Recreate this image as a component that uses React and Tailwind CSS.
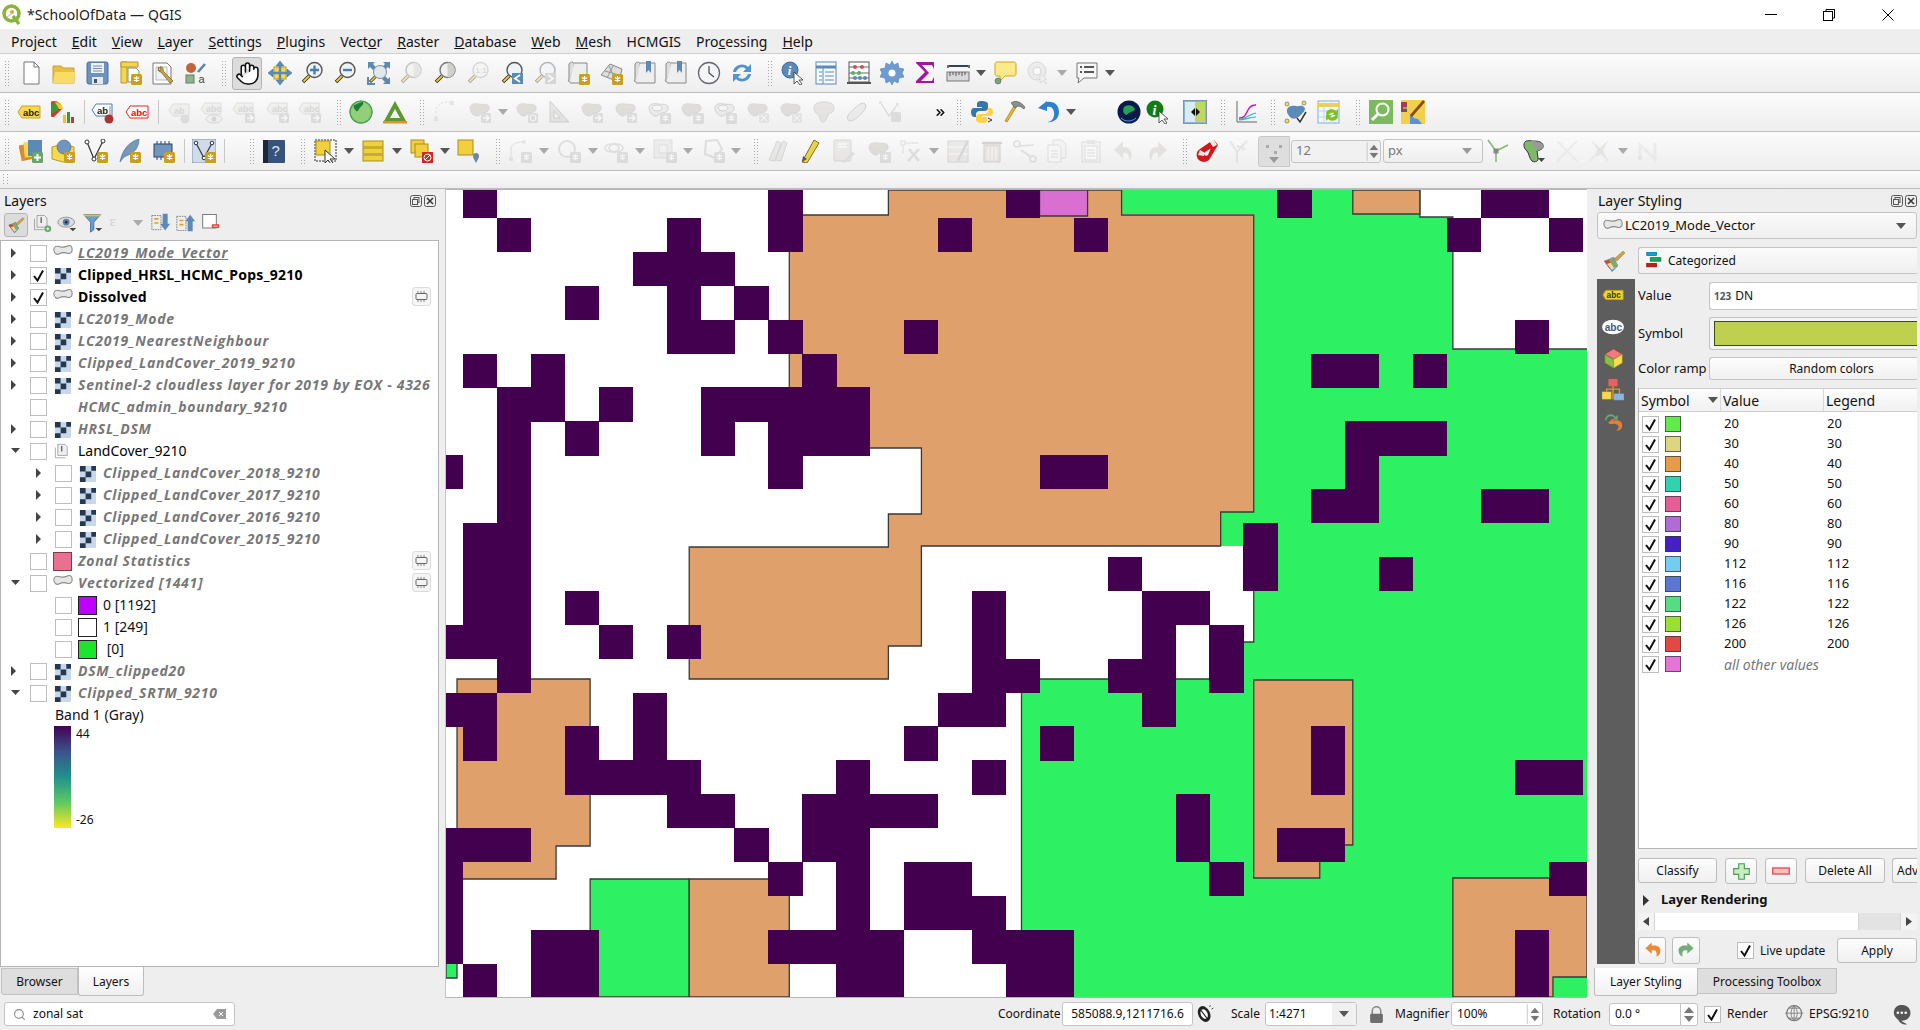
import React from "react";
import { Hand, Search, ChevronsRight } from "lucide-react";

const FONT = { fontFamily: '"Noto Sans", "Open Sans", sans-serif' };

const Badge = ({ c = "#c9a01e" }) => (
  <g>
    <rect x="13" y="13" width="11" height="11" rx="1.5" fill={c} />
    <path d="M18.5 15v6M15.8 16.5l5.4 3M21.2 16.5l-5.4 3" stroke="#fff" strokeWidth="1.3" />
  </g>
);
const Mag = ({ lens = "#eef3f8", stroke = "#555" }) => (
  <g>
    <path d="M9 15L3 21" stroke="#222" strokeWidth="3.4" />
    <path d="M9 15L3.5 20.5" stroke="#f2c83a" strokeWidth="1.8" />
    <circle cx="14.5" cy="9" r="7.5" fill={lens} stroke={stroke} strokeWidth="1.4" />
  </g>
);
const BLOB = "M2 8c0-4 5-5 9-4s9-1 10 3-3 6-6 6-4 4-7 3-6-4-6-8z";
const Blob = ({ f = "#bdbab4" }) => <path d={BLOB} fill={f} stroke="#999" strokeWidth="0.6" />;
const Tag = ({ fill, st, col = "#222", x = 6 }) => (
  <g>
    <path d="M1 12l4-6h18v12H5z" fill={fill} stroke={st} />
    <text x={x} y="15.5" fontSize="9.5" fontWeight="700" fill={col} fontFamily="Liberation Sans">abc</text>
  </g>
);
const Raster = () => (
  <g>
    <rect x="1" y="1" width="17" height="17" fill="#c8d8ea" />
    <path d="M1 1h6v6H1zM13 1h5v5h-5zM7 7h6v6H7zM1 13h6v5H1z" fill="#24394f" />
  </g>
);

const IC = {
  file: <g><path d="M5 1h10l5 5v17H5z" fill="#fff" stroke="#777" /><path d="M15 1v5h5" fill="none" stroke="#777" /></g>,
  folder: <g><path d="M1 5h8l2 2h11v15H1z" fill="#e8bf3e" stroke="#c9a233" /><path d="M1 22l2-11h20l-1 11z" fill="#f8dc66" /></g>,
  save: <g><rect x="2" y="1" width="21" height="22" rx="2" fill="#6b93bd" stroke="#4a7099" /><rect x="6" y="2" width="13" height="10" fill="#eef2f6" /><path d="M8 5h9M8 7.500h9M8 10h9" stroke="#7a8ea3" /><rect x="7" y="16" width="11" height="7" fill="#e3e8ee" /><rect x="9" y="18" width="3" height="4" fill="#456" /></g>,
  layout: <g><path d="M3 1h6v21H3z" fill="#f3d552" stroke="#b7982a" /><path d="M3 1h17v5H3z" fill="#f3d552" stroke="#b7982a" /><path d="M10 7h8l3 3v11H10z" fill="#fff" stroke="#888" /><Badge /></g>,
  manager: <g><path d="M3 2h14l4 4v17H3z" fill="#fff" stroke="#777" /><path d="M6 6h11v13H6z" fill="#eef3f8" stroke="#bbb" /><path d="M9 6c-2 3 0 5 2 5l9 11 3-2-10-10c1-2-1-5-3-4l1 3-2 1z" fill="#c9a640" stroke="#6c5a1c" strokeWidth="0.7" /></g>,
  style: <g><circle cx="7" cy="7" r="5" fill="#c0643a" /><rect x="2" y="14" width="8" height="8" fill="#8db48e" stroke="#5f7f60" /><path d="M14 11l7-8" stroke="#5a84ad" strokeWidth="2.6" /><text x="14.500" y="22" fontSize="11" fill="#444" fontFamily="Liberation Sans">a</text></g>,
  pan: <g><rect x="6" y="6" width="12" height="12" fill="#f5d94f" stroke="#b7982a" /><path d="M12 0l4 5h-8zM12 24l4-5H8zM0 12l5-4v8zM24 12l-5-4v8z" fill="#5b8ab8" stroke="#3f6a9a" strokeWidth="0.5" /><path d="M12 4v16M4 12h16" stroke="#5b8ab8" strokeWidth="2.4" /></g>,
  zoomIn: <g><Mag /><path d="M14.500 4.500v9M10 9h9" stroke="#4a7db0" strokeWidth="2.4" /></g>,
  zoomOut: <g><Mag /><path d="M10 9h9" stroke="#4a7db0" strokeWidth="2.4" /></g>,
  zoomFull: <g><path d="M1 1h7l-2 2 3 3-3 3-3-3-2 2zM23 1v7l-2-2-3 3-3-3 3-3-2-2zM23 23h-7l2-2-3-3 3-3 3 3 2-2z" fill="#5b8ab8" /><path d="M1 16v7h7" stroke="#5b8ab8" strokeWidth="2" fill="none" /><path d="M9 15L3 21" stroke="#222" strokeWidth="3" /><path d="M9 15L3.500 20.500" stroke="#f2c83a" strokeWidth="1.7" /><circle cx="13" cy="11" r="6.500" fill="#dfe8f0" stroke="#888" /></g>,
  zoomSel: <g><Mag lens="#f0f0ee" stroke="#777" /><path d="M14.500 1.500a7.500 7.500 0 010 15z" fill="#cfcfcb" /></g>,
  zoom11: <g><Mag lens="#f4f4f2" stroke="#aaa" /><text x="9.500" y="12" fontSize="8" fill="#999" fontFamily="Liberation Sans">1:1</text></g>,
  zoomLast: <g><Mag /><rect x="12" y="12" width="11" height="11" fill="#5b8ab8" /><path d="M20 14l-5 3.500 5 3.500" stroke="#fff" strokeWidth="1.800" fill="none" /></g>,
  zoomNext: <g><Mag /><rect x="12" y="12" width="11" height="11" fill="#aaa" /><path d="M15 14l5 3.500-5 3.500" stroke="#fff" strokeWidth="1.800" fill="none" /></g>,
  newMap: <g><path d="M3 3c2-3 5-2 5 0v18H4c-2 0-2-2-1-3z" fill="#ddd" stroke="#888" /><path d="M8 2h13v20H4" fill="#eee" stroke="#888" /><Badge /></g>,
  new3d: <g><path d="M2 14L11 3l12 5-3 13z" fill="#ddd" stroke="#888" /><path d="M6 10l14 4M10 5l6 13M14 5l-6 12" stroke="#999" fill="none" /><Badge /></g>,
  bookmark: <g><path d="M2 3c2-3 5-2 5 0v18H3c-2 0-2-2-1-3z" fill="#ddd" stroke="#888" /><path d="M7 2h15v20H3" fill="#eee" stroke="#888" /><path d="M13 0h5v12l-2.500-3-2.500 3z" fill="#5b8ab8" /></g>,
  clock: <g><circle cx="12" cy="12" r="10.500" fill="#f5f6f8" stroke="#667" strokeWidth="1.300" /><path d="M12 5v7l5 4" stroke="#445" strokeWidth="1.200" fill="none" /></g>,
  refresh: <g><path d="M3 11C4 4 13 1 18 6l3-3v8h-8l3-3c-3-3-8-2-10 3z" fill="#4f95d3" /><path d="M21 13c-1 7-10 10-15 5l-3 3v-8h8l-3 3c3 3 8 2 10-3z" fill="#4f95d3" /></g>,
  identify: <g><circle cx="9" cy="9" r="8" fill="#5b8ab8" stroke="#3f6a9a" /><text x="6.800" y="14" fontSize="13" fontWeight="700" fontStyle="italic" fill="#fff" fontFamily="Liberation Serif">i</text><path d="M13 11v12l3-3 3 4 2-1-3-4h4z" fill="#fff" stroke="#333" strokeWidth="0.8" /></g>,
  table: <g><rect x="2" y="1" width="20" height="22" fill="#f7fafd" stroke="#5b8ab8" /><path d="M2 6h20" stroke="#5b8ab8" strokeWidth="3" /><path d="M9 6v17M5 11h3M11 11h9M5 15h3M11 15h9M5 19h3M11 19h9" stroke="#5b8ab8" /></g>,
  abacus: <g><rect x="2" y="1" width="20" height="20" fill="#fff" stroke="#555" /><path d="M2 6h20M2 12h20M2 17h20" stroke="#666" /><circle cx="8" cy="6" r="2" fill="#d25050" /><circle cx="15" cy="6" r="2" fill="#d25050" /><circle cx="6" cy="12" r="2" fill="#5cb060" /><circle cx="12" cy="12" r="2" fill="#5cb060" /><circle cx="8" cy="17" r="2" fill="#5b8ab8" /><circle cx="13" cy="17" r="2" fill="#5b8ab8" /><circle cx="18" cy="17" r="2" fill="#5b8ab8" /><rect x="0" y="21" width="24" height="2" fill="#555" /></g>,
  gear: <g><path d="M12 0l2 4 4-2 1 5 5 1-2 4 2 4-5 1-1 5-4-2-2 4-2-4-4 2-1-5-5-1 2-4-2-4 5-1 1-5 4 2z" fill="#6e9bd0" stroke="#4a74a8" strokeWidth="0.5" /><circle cx="12" cy="12" r="3.500" fill="#fff" /></g>,
  sigma: <path d="M3 1h18v7l-2-4H9l7 8-8 8h11l2-4v6H3v-2l9-9-9-9z" fill="#a513a0" />,
  ruler: <g><path d="M3 5h19" stroke="#345" strokeWidth="2" /><path d="M2 4v3M23 4v3" stroke="#345" strokeWidth="1.500" /><rect x="1" y="11" width="22" height="9" fill="#d8d8d8" stroke="#777" /><path d="M4 11v4M7 11v3M10 11v4M13 11v3M16 11v4M19 11v3" stroke="#555" /></g>,
  note: <g><path d="M2 3c0-1 1-2 2-2h17c1 0 2 1 2 2v10c0 1-1 2-2 2H12l-5 5v-5H4c-1 0-2-1-2-2z" fill="#fbe98c" stroke="#c9a91e" /><circle cx="5" cy="20" r="3" fill="#7da36f" stroke="#456" strokeWidth="0.5" /></g>,
  gearcur: <g><circle cx="11" cy="10" r="9" fill="#ddd" stroke="#aaa" /><circle cx="11" cy="10" r="4" fill="#fff" stroke="#aaa" /><path d="M14 13v9l3-2 3 3 1-1-3-3 3-1z" fill="#eee" stroke="#aaa" strokeWidth="0.7" /></g>,
  tips: <g><path d="M2 2h20v15H9l-6 5 1-5H2z" fill="#f8f8f8" stroke="#777" /><path d="M5 6h2M5 11h2M9 6h10M9 11h10" stroke="#555" strokeWidth="2" /></g>,
  lbl: <Tag fill="#f7d94c" st="#c9a227" />,
  diagram: <g><path d="M11 9a8 8 0 10-8 8z" fill="#d33" /><path d="M4 2a8 8 0 018 7H4z" fill="#f6c71c" /><path d="M4 2a8 8 0 00-3 12l7-5z" fill="#3a9a38" /><rect x="12" y="15" width="3" height="8" fill="#f0c030" /><rect x="16" y="12" width="3" height="11" fill="#3a9a38" /><rect x="20" y="17" width="3" height="6" fill="#c33" /></g>,
  lblPin: <g><path d="M1 10l4-6h16v12H5z" fill="#fff" stroke="#4a7fb5" /><text x="6" y="13.500" fontSize="9.500" fontWeight="700" fill="#222" fontFamily="Liberation Sans">ab</text><path d="M19 6v10" stroke="#888" /><circle cx="18" cy="19" r="4.500" fill="#a33" /></g>,
  lblRed: <Tag fill="#fff" st="#e22" col="#d11" />,
  lblPinG: <g><path d="M1 10l4-6h16v12H5z" fill="#e8e6e1" stroke="#bbb" /><text x="6" y="13.500" fontSize="9" fontWeight="700" fill="#aaa" fontFamily="Liberation Sans">ab</text><circle cx="17" cy="19" r="4.500" fill="#bbb" /></g>,
  lblEye: <g><path d="M1 9l4-6h16v11H5z" fill="#e8e6e1" stroke="#bbb" /><text x="6" y="12" fontSize="9" fontWeight="700" fill="#aaa" fontFamily="Liberation Sans">abc</text><ellipse cx="14" cy="19" rx="8" ry="4" fill="#eee" stroke="#aaa" /><circle cx="14" cy="19" r="2.500" fill="#aaa" /></g>,
  lblBox: <g><path d="M1 9l4-6h16v11H5z" fill="#e8e6e1" stroke="#bbb" /><text x="6" y="12" fontSize="9" fontWeight="700" fill="#aaa" fontFamily="Liberation Sans">abc</text><rect x="13" y="13" width="10" height="10" rx="1.500" fill="#bbb" /><path d="M15 18h6m-3-3l3 3-3 3" stroke="#fff" strokeWidth="1.300" fill="none" /></g>,
  globeG: <g><circle cx="12" cy="12" r="11" fill="#93cf7b" stroke="#3e9c4a" strokeWidth="1.200" /><path d="M5 5c3 0 4-3 9-3 1 3-2 4-3 6-2 1-1 4-4 3-1-2-3-3-2-6z" fill="#1f7d35" /><circle cx="12" cy="12" r="11" fill="none" stroke="#4ba553" /></g>,
  triangle: <g><path d="M12 1L23 21H1zM12 9l-5 9h10z" fill="#5a9a2e" fillRule="evenodd" /><rect x="0" y="21" width="24" height="2.500" fill="#ef8a2b" /></g>,
  digit: <g><path d="M3 21V10C4 4 9 2 18 2" fill="none" stroke="#bbb" strokeWidth="1" strokeDasharray="2 2" /><rect x="1" y="17" width="4" height="4" fill="#ccc" /><rect x="17" y="1" width="4" height="4" fill="#ccc" /></g>,
  blobArr: <g><Blob /><rect x="13" y="13" width="10" height="10" rx="1.500" fill="#bbb" /><path d="M15 18h6m-3-3l3 3-3 3" stroke="#fff" strokeWidth="1.300" fill="none" /></g>,
  blobRot: <g><Blob /><rect x="13" y="13" width="10" height="10" rx="1.500" fill="#bbb" /><circle cx="18" cy="18" r="3" stroke="#fff" fill="none" /></g>,
  setsq: <g><path d="M3 1l19 21H3zM7 11v7h6z" fill="#cfccc6" stroke="#999" fillRule="evenodd" /></g>,
  blobBadge: <g><Blob /><Badge c="#bbb" /></g>,
  blobX: <g><Blob /><rect x="13" y="13" width="10" height="10" rx="1" fill="#ccc" /><path d="M15 15l6 6m0-6l-6 6" stroke="#fff" /></g>,
  ring: <g><path d={BLOB} fill="#ddd" stroke="#999" /><ellipse cx="10" cy="8" rx="5" ry="3" fill="#f3f3f3" stroke="#999" /><Badge c="#bbb" /></g>,
  arch: <path d="M2 8c0-5 5-6 10-6s10 1 10 6-5 5-6 7-2 7-5 7-3-4-4-6-5-3-5-8z" fill="#cfcdc8" stroke="#aaa" />,
  leaf: <path d="M4 20c-2-5 3-8 7-12s8-6 10-4 0 6-4 10-10 9-13 6z" fill="#ddd" stroke="#999" />,
  vertex: <g><path d="M3 3l8 13 8-11" fill="none" stroke="#aaa" strokeWidth="1.200" /><rect x="1" y="1" width="3" height="3" fill="#ccc" /><rect x="18" y="3" width="3" height="3" fill="#ccc" /><rect x="13" y="12" width="10" height="10" rx="1.500" fill="#bbb" /></g>,
  python: <g><path d="M12 1c-5 0-5 2-5 3v3h5v1H4c-2 0-3 2-3 4s1 5 3 5h2v-3c0-2 2-3 4-3h5c1 0 3-1 3-3V4c0-2-3-3-6-3z" fill="#3776ab" /><path d="M12 23c5 0 5-2 5-3v-3h-5v-1h8c2 0 3-2 3-4s-1-4-3-4h-2v3c0 2-2 3-4 3H9c-1 0-3 1-3 3v3c0 2 3 3 6 3z" fill="#fdd344" /><path d="M18 22l4-2-4-2" stroke="#333" fill="none" /></g>,
  hammer: <g><path d="M14 6L4 22l-2-1L12 4z" fill="#efb51e" stroke="#8c6a10" strokeWidth="0.6" /><path d="M8 3c4-3 9-2 14 4l-1 2c-4-3-6-4-9-1z" fill="#8a8f94" stroke="#444" strokeWidth="0.5" /></g>,
  undoB: <g><path d="M11 2c7-1 12 3 12 10s-6 11-12 10c5 0 8-5 7-10s-4-6-7-5v4L2 8l9-7z" fill="#2d7fcf" /></g>,
  earth: <g><circle cx="12" cy="12" r="11.500" fill="#0c1a4a" /><path d="M7 7c4-3 9-2 11 2-2 4-6 2-8 6-3 0-5-4-3-8z" fill="#23a35a" /><path d="M4 18c5 5 12 3 15 0" stroke="#4aa0ef" fill="none" /></g>,
  infoG: <g><circle cx="9" cy="9" r="8.500" fill="#0f7d16" /><text x="6.500" y="14.500" fontSize="14" fontWeight="700" fill="#fff" fontFamily="Liberation Serif" fontStyle="italic">i</text><path d="M13 11v12l3-3 3 4 2-1-3-4h4z" fill="#fff" stroke="#333" strokeWidth="0.8" /></g>,
  swipe: <g><rect x="0" y="0" width="24" height="24" fill="#89b7d8" stroke="#778" /><rect x="12" y="2" width="10" height="20" fill="#bfd85e" /><rect x="2" y="2" width="10" height="20" fill="#dcecf6" /><path d="M12 8l-4 4 4 4zM13 8l4 4-4 4z" fill="#111" /></g>,
  chart: <g><path d="M3 1v21h20" stroke="#666" fill="none" /><path d="M5 18c5 0 6-2 9-8 2-4 5-5 8-5" stroke="#c0209e" strokeWidth="1.500" fill="none" /><path d="M5 20c7 0 9-3 17-3M5 19c8 0 10-5 17-6" stroke="#3eb0c0" strokeWidth="1.200" fill="none" /></g>,
  vcheck: <g><path d="M3 10c0-4 6-5 9-4s5-2 8 1-2 6-3 8-8 6-11 2 -3-4-3-7z" fill="#5b8ab8" /><circle cx="3" cy="4" r="2" fill="#f5e04f" stroke="#555" strokeWidth="0.6" /><circle cx="20" cy="3" r="2" fill="#f5e04f" stroke="#555" strokeWidth="0.6" /><circle cx="3" cy="21" r="2" fill="#f5e04f" stroke="#555" strokeWidth="0.6" /><path d="M13 18l3 4 6-10" stroke="#333" strokeWidth="1.500" fill="#fff" /></g>,
  tabSync: <g><rect x="1" y="1" width="21" height="22" fill="#f4f8fc" stroke="#7ab0d8" /><path d="M1 5h21" stroke="#f3cc4a" strokeWidth="4" /><path d="M7 1v22M14 1v22M1 11h21M1 17h21" stroke="#bcd6ec" /><path d="M9 14c0-5 7-6 10-3l2-2v6h-6l2-2c-2-1-5 0-6 3z" fill="#7cc226" /><path d="M21 16c0 5-7 6-10 3l-2 2v-6h6l-2 2c2 1 5 0 6-3z" fill="#7cc226" /></g>,
  greenMag: <g><rect x="0" y="0" width="24" height="24" fill="#7cb95f" /><circle cx="13.500" cy="9.500" r="6" fill="none" stroke="#fff" strokeWidth="2" /><path d="M9 14l-6 6" stroke="#fff" strokeWidth="3" /></g>,
  osm: <g><rect x="0" y="0" width="24" height="24" fill="#f3d04c" /><path d="M0 2h6v10H0z" fill="#a73a5a" /><path d="M9 14c3 2 3 5 8 5l4 5H9z" fill="#5a8ee0" /><path d="M22 0L9 15l2 2L24 2z" fill="#8a4a14" /><path d="M2 8h4" stroke="#5c5" strokeWidth="2" /></g>,
  addLayer: <g><rect x="1" y="5" width="13" height="16" fill="#d8893a" transform="rotate(-12 8 13)" /><rect x="5" y="3" width="12" height="15" fill="#f5d94f" transform="rotate(-6 10 10)" /><rect x="9" y="1" width="14" height="16" fill="#5b8ab8" /><rect x="13" y="13" width="11" height="11" rx="1.500" fill="#6aa46a" /><path d="M18.500 15v7M15 18.500h7" stroke="#fff" strokeWidth="2" /></g>,
  addWms: <g><path d="M1 8l11-3 11 3v12l-11 3L1 20z" fill="#f5d94f" stroke="#b7982a" /><circle cx="13" cy="8" r="7" fill="#6f95c0" stroke="#456" strokeWidth="0.5" /><Badge c="#c9a01e" /></g>,
  addVec: <g><path d="M3 3l7 17 9-18" fill="none" stroke="#333" strokeWidth="1.200" /><circle cx="3" cy="3" r="2" fill="#fff" stroke="#333" /><circle cx="19" cy="2" r="2" fill="#fff" stroke="#333" /><circle cx="10" cy="20" r="2" fill="#fff" stroke="#333" /><Badge /></g>,
  feather: <g><path d="M3 23C5 12 11 3 22 0c0 8-4 14-13 17-2 1-4 3-6 6z" fill="#7797bb" stroke="#3f6a9a" strokeWidth="0.6" /><Badge /></g>,
  chip: <g><rect x="3" y="5" width="18" height="13" fill="#6f95c0" stroke="#345" /><path d="M6 2v3M10 2v3M14 2v3M18 2v3M6 18v3M10 18v3" stroke="#345" /><Badge /></g>,
  vtool: <g><rect x="0" y="0" width="24" height="24" rx="2" fill="#cfdbe8" stroke="#7d94ad" /><path d="M4 4l8 15 8-15" stroke="#444" strokeWidth="1.300" fill="none" /><circle cx="4" cy="4" r="1.800" fill="#fff" stroke="#333" /><circle cx="20" cy="4" r="1.800" fill="#fff" stroke="#333" /><circle cx="12" cy="19" r="1.800" fill="#fff" stroke="#333" /><Badge /></g>,
  help: <g><rect x="1" y="1" width="22" height="23" rx="1" fill="#37537c" /><rect x="1" y="1" width="5" height="23" fill="#1b2738" /><text x="9.500" y="17" fontSize="15" fill="#dfe7f0" fontFamily="Liberation Sans">?</text></g>,
  sel: <g><rect x="1" y="1" width="21" height="21" fill="none" stroke="#333" strokeDasharray="2 1" /><rect x="2" y="2" width="14" height="14" fill="#f1cf3e" stroke="#a98f18" /><path d="M11 11v13l3-3 3 4 2-1-3-4h5z" fill="#fff" stroke="#333" /></g>,
  selList: <g><rect x="2" y="2" width="20" height="6" fill="#f1cf3e" stroke="#a98f18" /><rect x="2" y="9" width="20" height="6" fill="#f1cf3e" stroke="#a98f18" /><rect x="2" y="16" width="20" height="6" fill="#f1cf3e" stroke="#a98f18" /></g>,
  deselect: <g><rect x="1" y="1" width="13" height="13" fill="#f1cf3e" stroke="#a98f18" /><rect x="5" y="5" width="13" height="13" fill="#f1cf3e" stroke="#a98f18" /><rect x="12" y="13" width="11" height="11" fill="#d42323" /><circle cx="17.500" cy="18.500" r="3.500" fill="none" stroke="#fff" /><path d="M15 21l5-5" stroke="#fff" /></g>,
  selLoc: <g><rect x="1" y="1" width="15" height="15" fill="#f1cf3e" stroke="#a98f18" /><path d="M19 24c-2-4-3-5-3-7a3 3 0 016 0c0 2-1 3-3 7z" fill="#6d87a0" /></g>,
  addPt: <g><path d="M3 20V9c1-4 5-6 12-6" fill="none" stroke="#bbb" /><rect x="1" y="18" width="4" height="4" fill="#ccc" /><circle cx="16" cy="3" r="2" fill="#ccc" /><Badge c="#bbb" /></g>,
  addCirc: <g><circle cx="10" cy="10" r="8" fill="none" stroke="#bbb" strokeWidth="2" /><Badge c="#bbb" /></g>,
  addOval: <g><ellipse cx="8" cy="9" rx="7" ry="4" fill="none" stroke="#bbb" strokeWidth="1.500" /><ellipse cx="12" cy="9" rx="7" ry="4" fill="none" stroke="#bbb" strokeWidth="1.500" /><Badge c="#bbb" /></g>,
  addRect: <g><rect x="1" y="1" width="18" height="18" fill="#ddd" stroke="#bbb" /><rect x="6" y="6" width="8" height="8" fill="#eee" stroke="#bbb" /><Badge c="#bbb" /></g>,
  addPoly: <g><path d="M5 2l11-1 5 9-7 9-10-4z" fill="none" stroke="#bbb" strokeWidth="2" /><Badge c="#bbb" /></g>,
  pencils: <g><path d="M2 21L10 2l4 2-6 18zM8 21l8-19 4 2-6 18z" fill="#d6d4cf" stroke="#aaa" /></g>,
  pencil: <g><path d="M3 23L15 1l5 3-12 20z" fill="#e8d44a" stroke="#7f6d1d" /><path d="M3 23l1-6 4 3z" fill="#555" /></g>,
  saveEd: <g><rect x="2" y="1" width="17" height="21" rx="1" fill="#d8d6d0" stroke="#aaa" /><path d="M6 5h9M6 8h9" stroke="#fff" strokeWidth="1.500" /><path d="M10 23l11-10 2 2-11 9z" fill="#bbb" /></g>,
  tools: <g><rect x="2" y="2" width="4" height="4" fill="none" stroke="#bbb" /><path d="M6 4h14M4 6v8" stroke="#bbb" /><path d="M10 10l10 12M20 10L9 22" stroke="#bbb" strokeWidth="2.400" /></g>,
  attr: <g><rect x="2" y="2" width="20" height="21" fill="#d8d6d0" stroke="#aaa" /><path d="M2 8h20M2 15h20" stroke="#fff" /><path d="M11 21L21 1l2 1-10 20z" fill="#aaa" /></g>,
  trash: <g><rect x="4" y="6" width="16" height="17" fill="#d5cdc8" stroke="#a99" /><path d="M2 4h20" stroke="#a99" strokeWidth="2.500" /><path d="M8 9v12M12 9v12M16 9v12" stroke="#fff" /></g>,
  scissors: <g><circle cx="4" cy="5" r="3" fill="none" stroke="#bbb" strokeWidth="1.600" /><circle cx="20" cy="20" r="3" fill="none" stroke="#bbb" strokeWidth="1.600" /><path d="M6 7l15-1M8 11l10 7" stroke="#bbb" strokeWidth="1.600" /></g>,
  copy: <g><path d="M8 1h9l4 4v14H8z" fill="#eee" stroke="#bbb" /><path d="M3 6h10l3 3v14H3z" fill="#f7f7f7" stroke="#bbb" /><path d="M6 12h7M6 15h7M6 18h7" stroke="#bbb" /></g>,
  paste: <g><rect x="3" y="3" width="18" height="20" fill="#eee" stroke="#bbb" /><rect x="6" y="7" width="12" height="14" fill="#fff" stroke="#bbb" /><rect x="8" y="1" width="8" height="4" fill="#ccc" /><path d="M8 11h8M8 14h8M8 17h8" stroke="#bbb" /></g>,
  undoG: <path d="M11 2L2 11l9 8v-5c4-1 6 1 7 8 3-7 2-14-7-14z" fill="#ccc8c2" />,
  redoG: <path d="M13 2l9 9-9 8v-5c-4-1-6 1-7 8-3-7-2-14 7-14z" fill="#ccc8c2" />,
  magnet: <g><path d="M19 1l4 5-9 15c-5 4-11 1-12-3-1-3 0-6 3-8L15 3l3 5-8 5c-2 2 0 5 3 3z" fill="#d4161c" /><path d="M15 3l3 5 4-2-3-5zM5 11l5 3-1 3-6-1z" fill="#e8e8e8" /></g>,
  branch: <g><path d="M9 24V13L2 2M9 13L18 3M9 7l7 3" fill="none" stroke="#ccc" strokeWidth="2" /><circle cx="18" cy="3" r="2" fill="#ddd" /><circle cx="16" cy="10" r="2" fill="#ddd" /></g>,
  ytopo: <g><path d="M10 23V12L2 1M10 12L22 6" fill="none" stroke="#82bb74" strokeWidth="1.600" /><rect x="7.500" y="9.500" width="5" height="5" fill="#888" /></g>,
  polyGreen: <g><path d="M2 6c0-4 3-5 8-4 4 0 10 0 11 4s-3 5-6 6l1 7c1 3-3 5-6 3-3-3-3-8-5-10S2 9 2 6z" fill="#7fb86a" stroke="#333" /><path d="M8 2c4 0 10 0 13 4 1 3-3 5-6 6l-3-5z" fill="#999" /><path d="M16 19h7l-3.500 4z" fill="#444" /></g>,
  xg: <path d="M2 2l20 20M22 2L2 22" stroke="#ddd" strokeWidth="2" />,
  xb: <g><path d="M2 22L11 11 20 2M4 2l16 20" stroke="#ddd" strokeWidth="1.500" /><path d="M7 4l5 5 7-6-4 9 4 8-7-5-4 3 1-7z" fill="#d0ccc4" /></g>,
  nn: <g><path d="M5 20V6l15 14V4" fill="none" stroke="#ddd" strokeWidth="3" /><circle cx="5" cy="19" r="2" fill="#ccc" /></g>,
  group: <g><path d="M6 3h9l3 3v11H6z" fill="#eee" stroke="#999" /><path d="M3 7v13h13" fill="none" stroke="#999" /><path d="M11 5v7" stroke="#555" strokeWidth="1.500" /></g>,
  grpAdd: <g><path d="M6 3h9l3 3v11H6z" fill="#eee" stroke="#999" /><path d="M3 7v13h13" fill="none" stroke="#999" /><path d="M11 5v7" stroke="#555" strokeWidth="1.500" /><circle cx="19" cy="19" r="4" fill="#5fa86a" /><path d="M19 17v4M17 19h4" stroke="#fff" /></g>,
  eye: <g><ellipse cx="11" cy="11" rx="10" ry="6" fill="#ddd" stroke="#888" /><circle cx="11" cy="11" r="4" fill="#5b7fa4" /><circle cx="11" cy="11" r="1.500" fill="#223" /><path d="M15 18h8l-4 4z" fill="#444" /></g>,
  funnel: <g><path d="M1 2h20l-8 9v9l-4 3V11z" fill="#6e9bd0" stroke="#3f6a9a" /><path d="M1 2h20v2H1z" fill="#e5c232" /><path d="M15 18h8l-4 4z" fill="#444" /></g>,
  eps: <text x="2" y="16" fontSize="18" fill="#bbb" fontFamily="Liberation Serif">ε</text>,
  expand: <g><rect x="1" y="3" width="11" height="17" fill="#eee" stroke="#777" strokeDasharray="2 1" /><path d="M14 1h6v12h3l-6 8-6-8h3z" fill="#5b8ab8" /><path d="M4 7h5M4 12h5" stroke="#e8a020" strokeWidth="2" /></g>,
  collapse: <g><rect x="1" y="4" width="11" height="17" fill="#eee" stroke="#777" strokeDasharray="2 1" /><path d="M14 22h6V10h3l-6-8-6 8h3z" fill="#5b8ab8" /><path d="M4 9h5M4 14h5" stroke="#e8a020" strokeWidth="2" /></g>,
  removeLyr: <g><rect x="1" y="2" width="18" height="18" fill="#fff" stroke="#555" /><rect x="13" y="15" width="10" height="5" rx="1" fill="#e04040" /><rect x="15" y="17" width="6" height="1" fill="#fff" /></g>,
  brush: <g><path d="M2 12l8 11 6-6-4-9z" fill="#5b8ab8" /><path d="M2 12l5 7 5-4-3-5z" fill="#d8483a" /><path d="M5 15l5 6 4-3-3-5z" fill="#e8e0a0" /><path d="M12 10L21 2l2 2-8 8z" fill="#c9a640" stroke="#866" strokeWidth="0.4" /><path d="M10 8l6 8 -4 3-5-8z" fill="#86a86a" /></g>,
  cat: <g><rect x="1" y="0" width="14" height="5" fill="#0ea0d8" stroke="#0d6f98" /><rect x="6" y="8" width="15" height="5" fill="#17a85c" stroke="#0d7040" /><rect x="1" y="16" width="14" height="5" fill="#c61d14" stroke="#8a120d" /></g>,
  abcY: <g><path d="M1 12l3-5h19v10H4z" fill="#f2d22d" stroke="#c6a414" /><text x="5" y="15.500" fontSize="9" fontWeight="700" fill="#333" fontFamily="Liberation Sans">abc</text></g>,
  abcW: <g><ellipse cx="12" cy="12" rx="12" ry="8" fill="#fff" /><text x="3" y="16" fontSize="11" fontWeight="700" fill="#3f5c7a" fontFamily="Liberation Sans">abc</text></g>,
  cube: <g><path d="M12 1l10 6-10 6L2 7z" fill="#ef7a7f" stroke="#a33" strokeWidth="0.6" /><path d="M2 7l10 6v10L2 17z" fill="#88c040" stroke="#596b22" strokeWidth="0.6" /><path d="M22 7L12 13v10l10-6z" fill="#f6dd4c" stroke="#a38a20" strokeWidth="0.6" /></g>,
  tree: <g><rect x="7" y="0" width="10" height="8" fill="#e86060" /><rect x="0" y="14" width="10" height="8" fill="#f4d84c" stroke="#b7982a" strokeWidth="0.5" /><rect x="13" y="16" width="11" height="7" fill="#8cb4e0" stroke="#5b8ab8" strokeWidth="0.5" /><path d="M12 8v14M5 14v-3h14v5" stroke="#d89a2e" strokeWidth="1.500" fill="none" /></g>,
  hist: <g><path d="M5 12c0-6 8-8 12-3l-3 2h7V4l-3 3C13 0 3 4 3 12z" fill="#5fae75" transform="scale(0.8)" /><path d="M8 14c5-1 9-1 10 3 0 2-2 4-4 4 5 1 8-2 8-6s-4-7-10-5V7l-6 5z" fill="#e87e35" /></g>,
  undoO: <path d="M11 2L3 9l8 7v-4c5-1 7 1 6 8 4-2 5-5 5-8 0-5-5-7-11-6z" fill="#ea8a38" />,
  redoGn: <path d="M13 2l8 7-8 7v-4c-5-1-7 1-6 8-4-2-5-5-5-8 0-5 5-7 11-6z" fill="#72ad7c" />,
  plus: <path d="M8 1h8v7h7v8h-7v7H8v-7H1V8h7z" fill="#c9ecc0" stroke="#4e9c55" strokeWidth="1.600" />,
  mouse: <g><ellipse cx="11" cy="12" rx="7" ry="10" transform="rotate(-25 11 12)" fill="#222" /><ellipse cx="11" cy="12" rx="4" ry="6" transform="rotate(-25 11 12)" fill="#fff" /><path d="M6 6l9 12" stroke="#222" strokeWidth="1.400" /><path d="M17 3l2-1M20 6l2-1" stroke="#222" /></g>,
  lock: <g><path d="M6 12V7a6 6 0 0112 0v5" fill="none" stroke="#888" strokeWidth="2.200" /><rect x="3" y="11" width="18" height="13" rx="2" fill="#6e6e6e" /></g>,
  globeS: <g><circle cx="11" cy="11" r="9" fill="none" stroke="#777" strokeWidth="1.400" /><path d="M0 11h22M11 2v18M4 5h14M4 17h14M11 2c-5 5-5 13 0 18M11 2c5 5 5 13 0 18" stroke="#777" fill="none" /></g>,
  bubble: <g><path d="M10 1c5 0 10 3 10 9s-5 9-9 9h-1l-1 0 7 4c-3 1-8 0-10-5-3-2-5-5-5-8 0-6 4-9 9-9z" fill="#555" /><circle cx="5.500" cy="10" r="1.500" fill="#fff" /><circle cx="10" cy="10" r="1.500" fill="#fff" /><circle cx="14.500" cy="10" r="1.500" fill="#fff" /></g>,
};
const Ic = ({ n, s = 24, cls = "" }) => (
  <svg width={s} height={s} viewBox="0 0 24 24" className={`shrink-0 ${cls}`}>{IC[n]}</svg>
);

const Grip = () => (
  <div className="grid grid-cols-2 gap-[2px] w-[5px] mx-auto">
    {Array.from({ length: 18 }).map((_, i) => (
      <div key={i} className="w-[1px] h-[1px] bg-[#a8a8a8]" />
    ))}
  </div>
);
const Arrow = ({ c = "#555" }) => (
  <svg width="10" height="6" viewBox="0 0 10 6"><path d="M0 0h10L5 6z" fill={c} /></svg>
);

const T1 = [[7, "grip"], [31, "file"], [64, "folder"], [97, "save"], [130, "layout"], [162, "manager"], [196, "style"], [224, "grip"], [247, "hand"], [280, "pan"], [312, "zoomIn"], [345, "zoomOut"], [379, "zoomFull"], [411, "zoomSel", 1], [445, "zoomSel"], [478, "zoom11", 1], [512, "zoomLast"], [545, "zoomNext", 1], [578, "newMap"], [611, "new3d"], [645, "bookmark"], [676, "bookmark"], [709, "clock"], [742, "refresh"], [770, "grip"], [793, "identify"], [826, "table"], [859, "abacus"], [892, "gear"], [925, "sigma"], [958, "ruler"], [981, "arrow"], [1005, "note"], [1038, "gearcur", 1], [1062, "arrowG"], [1087, "tips"], [1110, "arrow"]];
const T2 = [[7, "grip"], [29, "lbl"], [63, "diagram"], [84, "sep"], [103, "lblPin"], [137, "lblRed"], [158, "sep"], [180, "lblPinG"], [212, "lblEye"], [244, "lblBox"], [278, "lblBox"], [310, "lblBox"], [339, "grip"], [361, "globeG"], [395, "triangle"], [422, "grip"], [445, "digit"], [480, "blobArr"], [503, "arrowG"], [527, "blobRot"], [559, "setsq"], [592, "blobArr"], [626, "blobArr"], [659, "ring"], [692, "blobBadge"], [725, "ring"], [758, "blobX"], [791, "blobX"], [824, "arch"], [856, "leaf"], [890, "vertex"], [940, "more"], [959, "grip"], [982, "python"], [1015, "hammer"], [1048, "undoB"], [1071, "arrow"], [1129, "earth"], [1158, "infoG"], [1195, "swipe"], [1223, "grip"], [1246, "chart"], [1273, "grip"], [1296, "vcheck"], [1329, "tabSync"], [1358, "grip"], [1381, "greenMag"], [1413, "osm"]];
const T3 = [[7, "grip"], [31, "addLayer"], [63, "addWms"], [96, "addVec"], [129, "feather"], [163, "chip"], [184, "sep"], [204, "vtool"], [224, "sep"], [252, "grip"], [274, "help"], [303, "grip"], [326, "sel"], [349, "arrow"], [373, "selList"], [397, "arrow"], [422, "deselect"], [445, "arrow"], [469, "selLoc"], [498, "grip"], [520, "addPt"], [544, "arrowG"], [569, "addCirc"], [593, "arrowG"], [616, "addOval"], [640, "arrowG"], [665, "addRect"], [688, "arrowG"], [713, "addPoly"], [736, "arrowG"], [756, "grip"], [779, "pencils"], [811, "pencil", 2], [844, "saveEd"], [879, "blobBadge"], [911, "tools"], [934, "arrowG"], [958, "attr"], [992, "trash"], [1025, "scissors"], [1057, "copy"], [1091, "paste"], [1124, "undoG"], [1157, "redoG"], [1185, "grip"], [1207, "magnet", 2], [1240, "branch"]];
const T3b = [[1498, "ytopo"], [1534, "polyGreen"], [1567, "xg"], [1600, "xb"], [1623, "arrowG"], [1647, "nn"]];

const DIS = new Set(["lblPinG", "lblEye", "lblBox", "digit", "blobArr", "blobRot", "setsq", "blobBadge", "ring", "blobX", "arch", "leaf", "vertex", "addPt", "addCirc", "addOval", "addRect", "addPoly", "pencils", "saveEd", "tools", "attr", "trash", "scissors", "copy", "paste", "undoG", "redoG", "branch", "xg", "xb", "nn", "zoomNext"]);

function BarItems({ items, start = 0 }) {
  let cur = start;
  return items.map(([cx, n, dis], i) => {
    const w = n === "grip" ? 8 : n === "sep" ? 1 : n === "hand" ? 30 : n.startsWith("arrow") ? 10 : 24;
    const ml = cx - w / 2 - cur;
    cur = cx + w / 2;
    const st = { marginLeft: ml, width: w };
    if (n === "grip") return <div key={i} style={st}><Grip /></div>;
    if (n === "sep") return <div key={i} style={st} className="h-[24px] bg-[#c8c8c8]" />;
    if (n === "arrow") return <div key={i} style={st} className="flex justify-center"><Arrow /></div>;
    if (n === "arrowG") return <div key={i} style={st} className="flex justify-center"><Arrow c="#aaa" /></div>;
    if (n === "more") return <div key={i} style={st} className="flex justify-center"><ChevronsRight size={13} strokeWidth={3} color="#111" /></div>;
    if (n === "hand") return (
      <div key={i} style={st} className="h-[33px] flex items-center justify-center rounded-[3px] bg-[#dcdcdc] border border-[#b5b5b5]">
        <Hand size={25} fill="#fff" color="#111" strokeWidth={1.5} />
      </div>
    );
    const disabled = dis === 1 || (typeof dis === "undefined" && DIS.has(n));
    return <div key={i} style={st}><Ic n={n} cls={disabled ? "opacity-40" : ""} /></div>;
  });
}

const Toolbar = ({ children, h = "h-[39px]" }) => (
  <div className={`${h} flex items-center shrink-0 border-b border-[#bcbcbc] bg-gradient-to-b from-[#fbfbfb] to-[#eeeeee]`}>{children}</div>
);

const Menu = [
  ["Pro", "j", "ect"], ["", "E", "dit"], ["", "V", "iew"], ["", "L", "ayer"], ["", "S", "ettings"], ["", "P", "lugins"], ["Vect", "o", "r"], ["", "R", "aster"], ["", "D", "atabase"], ["", "W", "eb"], ["", "M", "esh"], ["HCMGIS", "", ""], ["Pro", "c", "essing"], ["", "H", "elp"],
];

const Check = ({ on, cls = "" }) => (
  <div className={`w-[17px] h-[17px] shrink-0 border border-[#bdbdbd] bg-white flex items-center justify-center ${cls}`}>
    {on && <svg width="13" height="13" viewBox="0 0 13 13"><path d="M2 7l3.500 4.500L11 1.500" fill="none" stroke="#111" strokeWidth="2" /></svg>}
  </div>
);
const Tri = ({ open }) => open ? (
  <svg width="9" height="6" viewBox="0 0 9 6"><path d="M0 0h9L4.500 5z" fill="#444" /></svg>
) : (
  <svg width="6" height="10" viewBox="0 0 6 10"><path d="M0 0v10l5-5z" fill="#444" /></svg>
);
const Chip = () => (
  <div className="w-[19px] h-[19px] rounded-[3px] border border-[#dcdcdc] bg-[#f5f5f5] flex items-center justify-center">
    <svg width="13" height="11" viewBox="0 0 13 11"><rect x="1" y="2.500" width="11" height="6" rx="1" fill="none" stroke="#666" /><path d="M3 0v2M6 0v2M9 0v2M3 9v2M6 9v2M9 9v2" stroke="#888" /></svg>
  </div>
);

const ROWS = [
  { t: "LC2019_Mode_Vector", i: "poly", k: "gi", u: 1, arrow: "r" },
  { t: "Clipped_HRSL_HCMC_Pops_9210", i: "raster", k: "b", on: 1, arrow: "r" },
  { t: "Dissolved", i: "poly", k: "b", on: 1, arrow: "r", chip: 1 },
  { t: "LC2019_Mode", i: "raster", k: "gi", arrow: "r" },
  { t: "LC2019_NearestNeighbour", i: "raster", k: "gi", arrow: "r" },
  { t: "Clipped_LandCover_2019_9210", i: "raster", k: "gi", arrow: "r" },
  { t: "Sentinel-2 cloudless layer for 2019 by EOX - 4326", i: "raster", k: "gi", arrow: "r" },
  { t: "HCMC_admin_boundary_9210", k: "gi" },
  { t: "HRSL_DSM", i: "raster", k: "gi", arrow: "r" },
  { t: "LandCover_9210", i: "group", arrow: "d" },
  { t: "Clipped_LandCover_2018_9210", i: "raster", k: "gi", arrow: "r", ind: 1 },
  { t: "Clipped_LandCover_2017_9210", i: "raster", k: "gi", arrow: "r", ind: 1 },
  { t: "Clipped_LandCover_2016_9210", i: "raster", k: "gi", arrow: "r", ind: 1 },
  { t: "Clipped_LandCover_2015_9210", i: "raster", k: "gi", arrow: "r", ind: 1 },
  { t: "Zonal Statistics", i: "pink", k: "gi", chip: 1 },
  { t: "Vectorized [1441]", i: "poly", k: "gi", arrow: "d", chip: 1 },
  { t: "0 [1192]", leg: "#bf00ff" },
  { t: "1 [249]", leg: "#ffffff" },
  { t: "\u00a0[0]", leg: "#1ce52f" },
  { t: "DSM_clipped20", i: "raster", k: "gi", arrow: "r" },
  { t: "Clipped_SRTM_9210", i: "raster", k: "gi", arrow: "d" },
];

const RowIcon = ({ i }) => {
  if (i === "poly") return <svg width="20" height="17" viewBox="0 0 24 16" className="mb-[3px]"><path d="M1 6c0-4 3-5 6-4 5 2 9 0 11-1 3-1 5 1 5 5s-3 5-6 4-8 0-10 1-6 0-6-5z" fill="#e6e6e4" stroke="#8a8a8a" strokeWidth="1.300" /></svg>;
  if (i === "raster") return <svg width="17" height="17" viewBox="0 0 18 18"><Raster /></svg>;
  if (i === "group") return <Ic n="group" s={19} />;
  if (i === "pink") return <div className="w-[19px] h-[19px] bg-[#ea7090] border border-[#7c3b4a]" />;
  return <div className="w-[17px]" />;
};

function TreeRow({ r }) {
  if (r.leg) return (
    <div className="h-[22px] flex items-center pl-[54px]">
      <Check />
      <div className="ml-[6px] w-[19px] h-[19px] border border-[#222]" style={{ backgroundColor: r.leg }} />
      <span className="ml-[6px] whitespace-pre">{r.t}</span>
    </div>
  );
  const txt = r.k === "b" ? "font-bold text-black tracking-[0.25px]" : r.k === "gi" ? "font-['Open_Sans'] font-bold italic text-[#777777] tracking-[0.72px]" : "text-black";
  return (
    <div className="h-[22px] flex items-center relative">
      <div className={`${r.ind ? "w-[54px] pl-[35px]" : "w-[29px] pl-[10px]"} shrink-0 flex items-center`}>
        {r.arrow && <Tri open={r.arrow === "d"} />}
      </div>
      <Check on={r.on} />
      <div className="w-[31px] shrink-0 flex justify-center"><RowIcon i={r.i} /></div>
      <span className={`${txt} ${r.u ? "underline" : ""} whitespace-nowrap`}>{r.t}</span>
      {r.chip && <div className="absolute left-[411px] top-[1px]"><Chip /></div>}
    </div>
  );
}

const CATS = [
  ["#62ea4f", "20", "20"], ["#dcd682", "30", "30"], ["#e69b49", "40", "40"], ["#30d2b0", "50", "50"], ["#e45e96", "60", "60"], ["#b06cd4", "80", "80"], ["#4420c6", "90", "90"], ["#72cdf0", "112", "112"], ["#5a78d2", "116", "116"], ["#56dc82", "122", "122"], ["#9ae034", "126", "126"], ["#e04a42", "200", "200"], ["#e275d6", "all other values", "", 1],
];

const P = {
  0: [0, 9, 16, 24, 30, 31],
  1: [1, 6, 9, 14, 18, 29, 32],
  2: [5, 6, 7],
  3: [3, 6, 8],
  4: [6, 7, 9, 13, 31],
  5: [0, 2, 10, 25, 26, 28],
  6: [1, 2, 4, 7, 8, 9, 10, 11],
  7: [1, 3, 7, 9, 10, 11, 26, 27, 28],
  8: [-1, 1, 9, 17, 18, 26],
  9: [1, 25, 26, 30, 31],
  10: [0, 1, 23],
  11: [0, 1, 19, 23, 27],
  12: [0, 1, 3, 15, 20, 21],
  13: [-1, 0, 1, 4, 6, 15, 20, 22],
  14: [1, 15, 16, 19, 20, 22],
  15: [-1, 0, 5, 14, 15, 20],
  16: [0, 3, 5, 13, 17, 25],
  17: [3, 4, 5, 6, 11, 15, 25, 31, 32],
  18: [6, 7, 10, 11, 12, 13, 21],
  19: [-1, 0, 1, 8, 10, 11, 21, 24, 25],
  20: [-1, 9, 11, 13, 14, 22, 32, 33],
  21: [-1, 11, 13, 14, 15],
  22: [-1, 2, 3, 9, 10, 11, 12, 15, 16, 17, 31],
  23: [0, 2, 3, 11, 12, 16, 17, 31],
};
const ORANGE = "#dfa06b", GREEN = "#2ef063", PURPLE = "#43004f", LINE = "#3a3a3a";
const MapCanvas = () => (
  <svg className="block w-full h-full" viewBox="447 190 1140 807" preserveAspectRatio="none">
    <rect x="447" y="190" width="1140" height="807" fill="#fff" />
    <g stroke={LINE} strokeWidth="1.300">
      <path d="M1122 190H1420V217H1453V349H1587V997H1022V679H1221V642H1254V546H1221V512H1254V214H1122Z" fill={GREEN} stroke="none" />
      <path d="M1254 546V642H1221V679H1022V997" fill="none" />
      <path d="M1420 190V217H1453V349H1587" fill="none" />
      <path d="M1353 190V214H1420V190Z" fill={ORANGE} />
      <path d="M889 190H1122V215H1254V512H1221V546H922V646H889V679H690V547H889V514H922V448H870L790 388V215H889Z" fill={ORANGE} />
      <path d="M1040 190H1088V216H1040Z" fill="#d96fd0" />
      <path d="M458 679H591V846H557V879H458Z" fill={ORANGE} />
      <path d="M591 879H690V997H591Z" fill={GREEN} />
      <path d="M690 879H790V997H690Z" fill={ORANGE} />
      <path d="M447 963H458V978H447Z" fill={GREEN} />
      <path d="M1254 680H1353V845H1320V878H1254Z" fill={ORANGE} />
      <path d="M1453 878H1587V977H1553V997H1453Z" fill={ORANGE} />
    </g>
    <g fill={PURPLE} shapeRendering="crispEdges">
      {Object.entries(P).flatMap(([r, cols]) =>
        cols.map((c) => (
          <rect key={r + "-" + c} x={464 + 33.9 * c} y={184 + 33.9 * r} width="34.2" height="34.2" />
        ))
      )}
    </g>
  </svg>
);

const Btn = ({ children, cls = "" }) => (
  <div className={`border border-[#bdbdbd] rounded-[3px] bg-gradient-to-b from-[#fdfdfd] to-[#f0f0f0] flex items-center justify-center ${cls}`}>{children}</div>
);
const Spin = () => (
  <div className="flex flex-col gap-[3px] items-center">
    <svg width="10" height="6" viewBox="0 0 10 6"><path d="M0 6h10L5 0z" fill="#777" /></svg>
    <svg width="10" height="6" viewBox="0 0 10 6"><path d="M0 0h10L5 6z" fill="#777" /></svg>
  </div>
);
const DockBtns = () => (
  <div className="flex gap-[2px]">
    <svg width="12" height="12" viewBox="0 0 12 12"><rect x="0.500" y="0.500" width="11" height="11" rx="2" fill="none" stroke="#555" /><rect x="4" y="2.500" width="5" height="5" fill="none" stroke="#555" /><rect x="2.500" y="4.500" width="5" height="5" fill="#eee" stroke="#555" /></svg>
    <svg width="12" height="12" viewBox="0 0 12 12"><rect x="0.500" y="0.500" width="11" height="11" rx="2" fill="none" stroke="#555" /><path d="M3 3l6 6M9 3l-6 6" stroke="#333" strokeWidth="1.500" /></svg>
  </div>
);

export default function App() {
  return (
    <div style={FONT} className="w-[1920px] h-[1030px] overflow-hidden bg-[#eeeeee] text-[13px] text-[#111] flex flex-col relative">
      {/* Title bar */}
      <div className="h-[29px] bg-white flex items-center shrink-0">
        <svg width="20" height="22" viewBox="0 0 20 22" className="ml-[2px]">
          <circle cx="9.500" cy="9.500" r="7.500" fill="none" stroke="#8ab43e" strokeWidth="3.600" />
          <path d="M11 12l6 8" stroke="#8ab43e" strokeWidth="3.600" />
          <circle cx="10" cy="8" r="2" fill="#e8a33a" />
          <path d="M5 13l4-3" stroke="#c9c9c9" strokeWidth="1.500" />
        </svg>
        <span className="ml-[5px] text-[14px] tracking-[0.1px] text-[#222]">*SchoolOfData — QGIS</span>
        <div className="ml-auto flex items-center">
          <div className="w-[62px] flex justify-center"><div className="w-[12px] h-[1px] bg-black" /></div>
          <div className="w-[54px] flex justify-center">
            <svg width="12" height="12" viewBox="0 0 12 12"><rect x="0.500" y="2.500" width="9" height="9" fill="none" stroke="#000" /><path d="M3 2.500V.5h8.500V9H9.500" fill="none" stroke="#000" /></svg>
          </div>
          <div className="w-[64px] flex justify-center">
            <svg width="12" height="12" viewBox="0 0 12 12"><path d="M.5.500l11 11M11.500.500l-11 11" stroke="#000" /></svg>
          </div>
        </div>
      </div>
      {/* Menu */}
      <div className="h-[25px] shrink-0 flex items-center gap-[15px] pl-[11px] border-b border-[#cfcfcf] bg-[#eeeeee] text-[14px]">
        {Menu.map(([a, b, c], i) => (
          <span key={i} className="whitespace-nowrap">{a}<span className="underline">{b}</span>{c}</span>
        ))}
      </div>
      <Toolbar><BarItems items={T1} /></Toolbar>
      <Toolbar><BarItems items={T2} /></Toolbar>
      <Toolbar>
        <BarItems items={T3} />
        <div className="ml-[6px] w-[32px] h-[31px] rounded-l-[3px] bg-[#dedede] border border-[#c8c8c8] shrink-0 flex flex-col items-center justify-between pt-[8px] pb-[3px]">
          <div className="w-[16px] flex justify-between"><div className="w-[3px] h-[3px] bg-[#aaa]" /><div className="w-[3px] h-[3px] bg-[#aaa]" /></div>
          <div className="w-[16px] pl-[8px]"><div className="w-[3px] h-[3px] bg-[#aaa]" /></div>
          <Arrow c="#999" />
        </div>
        <div className="ml-[1px] w-[90px] h-[23px] border border-[#c4c4c4] rounded-[3px] bg-[#f1f1f1] flex items-center text-[#777] pl-[4px] shrink-0">
          12
          <div className="ml-auto w-[14px] h-full border-l border-[#c4c4c4] flex flex-col items-center justify-center gap-[2px] scale-90"><Spin /></div>
        </div>
        <div className="ml-[2px] w-[100px] h-[24px] border border-[#c4c4c4] rounded-[3px] bg-gradient-to-b from-[#fafafa] to-[#eeeeee] flex items-center text-[#777] px-[4px] shrink-0">
          px<div className="ml-auto mr-[6px]"><Arrow c="#999" /></div>
        </div>
        <BarItems items={T3b} start={1483} />
      </Toolbar>
      <Toolbar h="h-[18px]"><div className="ml-[3px]"><div className="h-[12px] overflow-hidden"><Grip /></div></div></Toolbar>

      {/* Main */}
      <div className="flex-1 flex min-h-0">
        {/* Layers */}
        <div className="w-[446px] shrink-0 flex flex-col border-r border-[#c5c5c5]">
          <div className="h-[23px] flex items-center px-[4px] text-[14px]">
            <span>Layers</span>
            <div className="ml-auto mr-[5px]"><DockBtns /></div>
          </div>
          <div className="h-[28px] flex items-start pt-[1px] pl-[4px]">
            <div className="w-[24px] h-[24px] rounded-[3px] bg-[#dcdcdc] border border-[#b5b5b5] flex items-center justify-center"><Ic n="brush" s={18} /></div>
            <div className="ml-[1px] w-[25px] flex justify-center"><Ic n="grpAdd" s={20} /></div>
            <div className="w-[26px] flex justify-center"><Ic n="eye" s={20} /></div>
            <div className="w-[25px] flex justify-center"><Ic n="funnel" s={20} /></div>
            <div className="w-[25px] flex justify-center"><Ic n="eps" s={20} cls="opacity-60" /></div>
            <div className="w-[15px] flex justify-center pt-[7px]"><Arrow c="#aaa" /></div>
            <div className="ml-[3px] w-[26px] flex justify-center"><Ic n="expand" s={20} /></div>
            <div className="w-[24px] flex justify-center"><Ic n="collapse" s={20} /></div>
            <div className="w-[25px] flex justify-center"><Ic n="removeLyr" s={18} /></div>
          </div>
          <div className="w-[439px] h-[727px] bg-white border border-[#b5b5b5] text-[14px] leading-[22px] pt-[1px] relative overflow-hidden">
            {ROWS.map((r, i) => <TreeRow key={i} r={r} />)}
            <div className="h-[22px] pl-[54px] flex items-center pb-[1px]">Band 1 (Gray)</div>
            <div className="flex pl-[53px] h-[102px] text-[12px]">
              <div className="w-[17px] h-[102px] bg-[linear-gradient(to_bottom,#440154,#3b528b,#21918c,#5ec962,#fde725)]" />
              <div className="ml-[5px] flex flex-col justify-between h-full">
                <span className="leading-[16px]">44</span>
                <span className="leading-[16px]">-26</span>
              </div>
            </div>
          </div>
          <div className="h-[30px] flex items-start text-[12px]">
            <div className="mt-[1px] ml-[1px] w-[77px] h-[27px] bg-[#dedede] border border-[#c2c2c2] rounded-bl-[3px] flex items-center justify-center pt-[1px]">Browser</div>
            <div className="w-[66px] h-[29px] bg-gradient-to-b from-[#ffffff] to-[#f0f0f0] border border-t-0 border-[#bdbdbd] rounded-b-[3px] flex items-center justify-center pt-[2px]">Layers</div>
          </div>
        </div>

        {/* Map */}
        <div className="w-[1141px] shrink-0 border-t border-b border-[#b5b5b5] relative bg-white">
          <MapCanvas />
        </div>

        {/* Layer styling */}
        <div className="w-[333px] shrink-0 pl-[10px] pr-[3px] flex flex-col text-[12px]">
          <div className="h-[23px] flex items-center text-[14px]">
            <span className="ml-[1px]">Layer Styling</span>
            <div className="ml-auto"><DockBtns /></div>
          </div>
          <div className="h-[27px] shrink-0 border border-[#c4c4c4] rounded-[3px] bg-gradient-to-b from-[#fafafa] to-[#f0f0f0] flex items-center pl-[5px] pr-[10px]">
            <svg width="20" height="17" viewBox="0 0 24 16"><path d="M1 6c0-4 3-5 6-4 5 2 9 0 11-1 3-1 5 1 5 5s-3 5-6 4-8 0-10 1-6 0-6-5z" fill="#e6e6e4" stroke="#8a8a8a" strokeWidth="1.300" /></svg>
            <span className="ml-[2px] text-[13px] pt-[1px]">LC2019_Mode_Vector</span>
            <div className="ml-auto"><Arrow /></div>
          </div>
          <div className="mt-[8px] h-[27px] shrink-0 flex">
            <div className="w-[41px] flex items-center pl-[5px]"><Ic n="brush" s={24} /></div>
            <div className="flex-1 border border-r-0 border-[#c4c4c4] rounded-l-[3px] bg-gradient-to-b from-[#fafafa] to-[#f0f0f0] flex items-center pl-[7px]">
              <Ic n="cat" s={17} /><span className="ml-[5px] pt-[1px]">Categorized</span>
            </div>
          </div>
          <div className="mt-[5px] h-[685px] shrink-0 flex">
            <div className="w-[38px] shrink-0 bg-[#5d5d5d] flex flex-col items-center pr-[6px]">
              <div className="h-[32px] flex items-center"><Ic n="abcY" s={22} /></div>
              <div className="h-[31px] flex items-center"><Ic n="abcW" s={22} /></div>
              <div className="h-[32px] flex items-center"><Ic n="cube" s={21} /></div>
              <div className="h-[32px] flex items-center"><Ic n="tree" s={22} /></div>
              <div className="h-[32px] flex items-center"><Ic n="hist" s={21} /></div>
            </div>
            <div className="flex-1 pl-[3px] min-w-0 flex flex-col">
              <div className="mt-[3px] h-[28px] flex items-center shrink-0">
                <span className="w-[71px] text-[13px]">Value</span>
                <div className="flex-1 h-full border border-[#c4c4c4] border-r-0 rounded-l-[3px] bg-white flex items-center pl-[4px]">
                  <span className="text-[10px] font-bold text-[#555]">123</span><span className="ml-[4px]">DN</span>
                </div>
              </div>
              <div className="mt-[7px] h-[33px] flex items-center shrink-0">
                <span className="w-[71px] text-[13px] pt-[1px]">Symbol</span>
                <div className="flex-1 h-full border border-[#c4c4c4] border-r-0 rounded-l-[3px] bg-[#f4f4f4] pl-[4px] py-[3px]">
                  <div className="h-full bg-[#bfd04f] border border-[#3d4a18] border-r-0" />
                </div>
              </div>
              <div className="mt-[7px] h-[23px] flex items-center shrink-0">
                <span className="w-[71px] text-[13px] whitespace-nowrap pt-[1px]">Color ramp</span>
                <div className="flex-1 h-full border border-[#c4c4c4] border-r-0 rounded-l-[3px] bg-gradient-to-b from-[#fdfdfd] to-[#f0f0f0] flex items-center justify-center pl-[36px] pt-[1px]">Random colors</div>
              </div>
              <div className="mt-[8px] h-[461px] shrink-0 border-l border-b border-[#b5b5b5] bg-white flex flex-col">
                <div className="h-[24px] shrink-0 flex items-center bg-gradient-to-b from-[#fdfdfd] to-[#f1f1f1] border-t border-b border-[#cfcfcf] text-[14px] mb-[2px]">
                  <div className="w-[82px] h-full border-r border-[#d8d8d8] flex items-center pl-[2px]">
                    Symbol
                    <div className="ml-auto mr-[2px]"><Arrow c="#555" /></div>
                  </div>
                  <div className="w-[103px] h-full border-r border-[#d8d8d8] flex items-center pl-[2px]">Value</div>
                  <div className="pl-[2px]">Legend</div>
                </div>
                {CATS.map(([c, v, l, it], i) => (
                  <div key={i} className="h-[20px] flex items-center shrink-0 text-[13px]">
                    <Check on cls="ml-[3px]" />
                    <div className="ml-[6px] w-[16px] h-[16px] border border-[#333]/70" style={{ backgroundColor: c }} />
                    <span className={`ml-[43px] w-[103px] ${it ? "italic text-[14px] text-[#777] whitespace-nowrap" : ""}`}>{v}</span>
                    <span>{l}</span>
                  </div>
                ))}
              </div>
              <div className="mt-[9px] h-[25px] flex shrink-0 whitespace-nowrap">
                <Btn cls="w-[79px] h-full">Classify</Btn>
                <Btn cls="ml-[8px] w-[32px] h-[26px]"><Ic n="plus" s={17} /></Btn>
                <Btn cls="ml-[8px] w-[32px] h-[26px]"><svg width="18" height="8" viewBox="0 0 24 10"><rect x="1" y="1" width="22" height="8" fill="#f8c0c0" stroke="#e8595f" strokeWidth="2" /></svg></Btn>
                <Btn cls="ml-[8px] w-[80px] h-full">Delete All</Btn>
                <div className="ml-[7px] flex-1 h-full border border-r-0 border-[#bdbdbd] rounded-l-[3px] bg-gradient-to-b from-[#fdfdfd] to-[#f0f0f0] pl-[4px] flex items-center overflow-hidden">Adv</div>
              </div>
              <div className="mt-[8px] h-[18px] flex items-center shrink-0 font-bold">
                <span className="ml-[5px]"><svg width="7" height="11" viewBox="0 0 7 11"><path d="M0 0v11l6-5.500z" fill="#333" /></svg></span>
                <span className="ml-[11px] text-[13px]">Layer Rendering</span>
              </div>
              <div className="mt-[4px] h-[17px] flex items-center shrink-0 bg-[#f3f3f3]">
                <div className="w-[16px] flex justify-center"><svg width="6" height="9" viewBox="0 0 6 9"><path d="M6 0v9L0 4.500z" fill="#444" /></svg></div>
                <div className="w-[205px] h-full bg-white border-l border-r border-[#d5d5d5]" />
                <div className="flex-1 h-full bg-[#e3e3e3] border-r border-[#d5d5d5]" />
                <div className="w-[16px] flex justify-center"><svg width="6" height="9" viewBox="0 0 6 9"><path d="M0 0v9l6-4.500z" fill="#444" /></svg></div>
              </div>
              <div className="mt-[7px] h-[27px] flex items-center shrink-0">
                <Btn cls="w-[28px] h-[27px]"><Ic n="undoO" s={19} /></Btn>
                <Btn cls="ml-[6px] w-[28px] h-[27px]"><Ic n="redoGn" s={19} /></Btn>
                <Check on cls="ml-[37px]" />
                <span className="ml-[6px] w-[77px] whitespace-nowrap">Live update</span>
                <Btn cls="ml-[0px] w-[80px] h-[25px]">Apply</Btn>
              </div>
            </div>
          </div>
          <div className="mt-[4px] flex items-start -ml-[3px] whitespace-nowrap">
            <div className="w-[104px] h-[28px] bg-gradient-to-b from-white to-[#f1f1f1] border border-t-0 border-[#bdbdbd] rounded-b-[3px] flex items-center justify-center pt-[1px]">Layer Styling</div>
            <div className="w-[139px] h-[26px] bg-[#dedede] border border-l-0 border-[#c2c2c2] rounded-br-[3px] flex items-center justify-center pt-[1px]">Processing Toolbox</div>
          </div>
        </div>
      </div>

      {/* Status bar */}
      <div className="h-[32px] shrink-0 flex items-center text-[12px] whitespace-nowrap">
        <div className="ml-[4px] w-[231px] h-[24px] bg-white border border-[#c4c4c4] rounded-[3px] flex items-center pl-[8px] pr-[8px]">
          <Search size={13} color="#888" />
          <span className="ml-[7px]">zonal sat</span>
          <svg className="ml-auto" width="13" height="10" viewBox="0 0 13 10"><path d="M0 5l4-5h9v10H4z" fill="#9a9a9a" /><path d="M6 3l4 4m0-4l-4 4" stroke="#fff" /></svg>
        </div>
        <div className="ml-[763px] w-[64px]">Coordinate</div>
        <div className="w-[131px] h-[24px] bg-white border border-[#c4c4c4] rounded-[3px] flex items-center justify-center">585088.9,1211716.6</div>
        <div className="w-[38px] pl-[2px]"><Ic n="mouse" s={20} /></div>
        <div className="w-[34px]">Scale</div>
        <div className="w-[92px] h-[24px] bg-white border border-[#c4c4c4] rounded-[3px] flex items-center pl-[3px]">1:4271<div className="ml-auto w-[24px] h-full bg-[#f0f0f0] flex items-center justify-center"><Arrow /></div></div>
        <div className="w-[38px] flex justify-center"><Ic n="lock" s={17} /></div>
        <div className="w-[56px]">Magnifier</div>
        <div className="w-[92px] h-[24px] bg-white border border-[#c4c4c4] rounded-[3px] flex items-center pl-[5px]">100%<div className="ml-auto w-[16px] scale-90 border-l border-[#c4c4c4] h-full flex items-center justify-center"><Spin /></div></div>
        <div className="ml-[10px] w-[56px]">Rotation</div>
        <div className="w-[89px] h-[23px] bg-white border border-[#c4c4c4] rounded-[3px] flex items-center pl-[5px]">0.0 °<div className="ml-auto w-[17px] border-l border-[#c4c4c4] h-full flex items-center justify-center"><Spin /></div></div>
        <Check on cls="ml-[6px]" />
        <div className="ml-[6px] w-[58px]">Render</div>
        <Ic n="globeS" s={20} />
        <div className="ml-[4px] w-[84px]">EPSG:9210</div>
        <Ic n="bubble" s={21} />
      </div>
    </div>
  );
}
